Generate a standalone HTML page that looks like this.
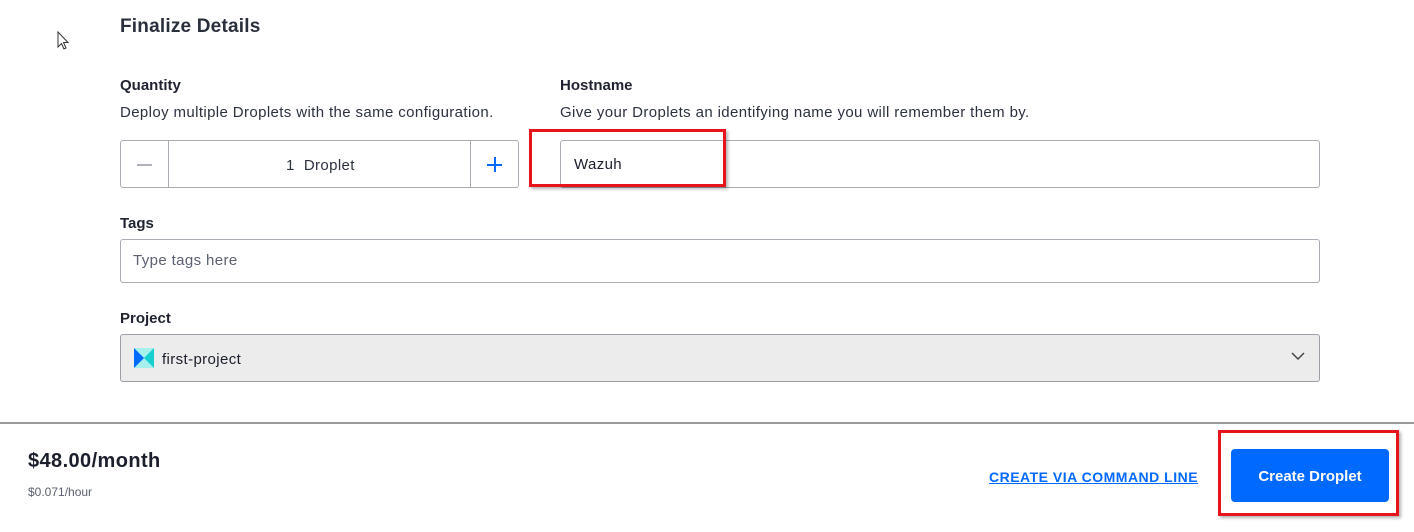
<!DOCTYPE html>
<html><head><style>
body{margin:0;width:1414px;height:532px;background:#fff;font-family:"Liberation Sans",sans-serif;color:#1b1f2c;position:relative;overflow:hidden}
.a{position:absolute}
.lbl{font-size:15px;font-weight:bold;color:#1f2330}
.sub{font-size:15px;color:#2c3140;letter-spacing:0.38px}
.box{border:1px solid #a8acb3;border-radius:3px;background:#fff;box-sizing:border-box}
</style></head><body>
<svg class="a" style="left:57px;top:31px" width="14" height="20" viewBox="0 0 14 20"><path d="M1 1 L1 16 L4.5 12.5 L7 18 L9 17 L6.5 11.5 L11 11.5 Z" fill="#fff" stroke="#333" stroke-width="1"/></svg>
<div class="a" style="left:120px;top:16px;font-size:19px;font-weight:bold;color:#2a2f3c;letter-spacing:0.2px">Finalize Details</div>
<div class="a lbl" style="left:120px;top:77px">Quantity</div>
<div class="a sub" style="left:120px;top:104px">Deploy multiple Droplets with the same configuration.</div>
<div class="a box" style="left:120px;top:140px;width:399px;height:48px"></div>
<div class="a" style="left:168px;top:141px;width:1px;height:46px;background:#a8acb3"></div>
<div class="a" style="left:470px;top:141px;width:1px;height:46px;background:#a8acb3"></div>
<div class="a" style="left:137px;top:164px;width:15px;height:1.5px;background:#b0b4ba"></div>
<div class="a" style="left:487px;top:164px;width:15px;height:1.5px;background:#0069ff"></div>
<div class="a" style="left:494px;top:157px;width:1.5px;height:15px;background:#0069ff"></div>
<div class="a sub" style="left:286px;top:157px">1&nbsp; Droplet</div>
<div class="a lbl" style="left:560px;top:77px">Hostname</div>
<div class="a sub" style="left:560px;top:104px">Give your Droplets an identifying name you will remember them by.</div>
<div class="a box" style="left:560px;top:140px;width:760px;height:48px"></div>
<div class="a sub" style="left:574px;top:156px;color:#1b1f2c">Wazuh</div>
<div class="a" style="left:529px;top:129px;width:191px;height:52px;border:3px solid #e8141c;box-shadow:2px 2px 3px rgba(0,0,0,.3)"></div>
<div class="a lbl" style="left:120px;top:215px">Tags</div>
<div class="a box" style="left:120px;top:239px;width:1200px;height:44px"></div>
<div class="a sub" style="left:133px;top:252px;color:#5b6070">Type tags here</div>
<div class="a lbl" style="left:120px;top:310px">Project</div>
<div class="a box" style="left:120px;top:334px;width:1200px;height:48px;background:#ececec;border-color:#9a9ea5"></div>
<svg class="a" style="left:134px;top:348px" width="20" height="20" viewBox="0 0 20 20"><rect width="20" height="20" fill="#a8f0ee"/><path d="M0 0 L10 10 L0 20Z" fill="#0069ff"/><path d="M20 0 L10 10 L20 20Z" fill="#15d0cf"/></svg>
<div class="a sub" style="left:162px;top:351px;color:#1b1f2c">first-project</div>
<svg class="a" style="left:1291px;top:352px" width="14" height="9" viewBox="0 0 14 9"><path d="M1 1 L7 7 L13 1" fill="none" stroke="#444" stroke-width="1.5"/></svg>
<div class="a" style="left:0;top:422px;width:1414px;height:2px;background:#9a9a9a"></div>
<div class="a" style="left:28px;top:450px;font-size:20px;font-weight:bold;color:#1b1f2c;letter-spacing:0.4px">$48.00/month</div>
<div class="a" style="left:28px;top:485px;font-size:12px;color:#5b6070">$0.071/hour</div>
<div class="a" style="left:989px;top:469px;font-size:14px;font-weight:bold;color:#0069ff;text-decoration:underline;letter-spacing:.5px">CREATE VIA COMMAND LINE</div>
<div class="a" style="left:1231px;top:449px;width:158px;height:53px;background:#0069ff;border-radius:4px;color:#fff;font-size:15px;font-weight:bold;text-align:center;line-height:55px">Create Droplet</div>
<div class="a" style="left:1218px;top:430px;width:175px;height:80px;border:3px solid #e8141c;box-shadow:2px 2px 3px rgba(0,0,0,.3)"></div>
</body></html>
